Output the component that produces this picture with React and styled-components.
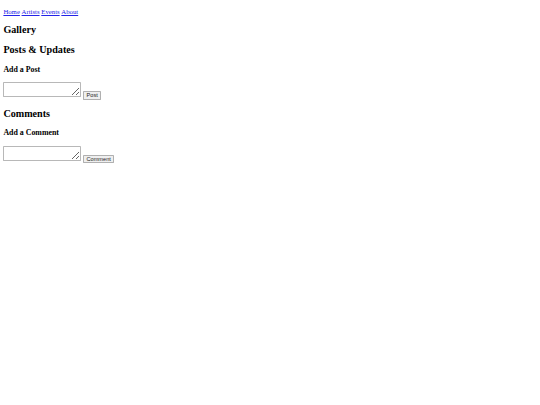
import React from 'react'
import styled, { createGlobalStyle } from 'styled-components'

const GlobalStyle = createGlobalStyle`
  html, body {
    margin: 0;
    padding: 0;
    background: #ffffff;
  }
`

const Page = styled.div`
  zoom: 0.421875;
  padding: 8px;
  font-family: "Liberation Serif", "Times New Roman", serif;
  font-size: 16px;
  color: #000000;
`

const Nav = styled.nav`
  padding-top: 11px;
  line-height: 18px;
  display: flex;
  gap: 4px;
`

const NavLink = styled.a`
  color: #2323e8;
  text-decoration: underline;
`

const SectionTitle = styled.h2`
  font-size: 24px;
  line-height: 28px;
  font-weight: bold;
  margin: 20px 0;
`

const SubTitle = styled.h3`
  font-size: 18.72px;
  line-height: 22px;
  font-weight: bold;
  margin: 18.72px 0;
`

const Form = styled.form`
  margin: 0;
`

const TextBox = styled.textarea`
  font-family: "Liberation Mono", monospace;
  font-size: 13.33px;
  width: 176px;
  height: 28px;
  padding: 2px;
  border: 1px solid #b8b8b8;
  border-radius: 2px;
  vertical-align: baseline;
`

const Button = styled.button`
  font-family: "Liberation Sans", Arial, sans-serif;
  font-size: 13.33px;
  margin-left: 4px;
  padding: 1px 6px;
  border: 1px solid #b0b0b0;
  border-radius: 2px;
  background: #efefef;
  color: #222222;
`

const links = ['Home', 'Artists', 'Events', 'About']

const App = () => (
  <>
    <GlobalStyle />
    <Page>
      <header>
        <Nav>
          {links.map((l) => (
            <NavLink key={l} href="#">{l}</NavLink>
          ))}
        </Nav>
      </header>
      <main>
        <SectionTitle>Gallery</SectionTitle>
        <section>
          <SectionTitle>Posts &amp; Updates</SectionTitle>
          <SubTitle>Add a Post</SubTitle>
          <Form onSubmit={(e) => e.preventDefault()}>
            <TextBox />
            <Button type="submit">Post</Button>
          </Form>
        </section>
        <section>
          <SectionTitle>Comments</SectionTitle>
          <SubTitle>Add a Comment</SubTitle>
          <Form onSubmit={(e) => e.preventDefault()}>
            <TextBox />
            <Button type="submit">Comment</Button>
          </Form>
        </section>
      </main>
    </Page>
  </>
)

export default App
